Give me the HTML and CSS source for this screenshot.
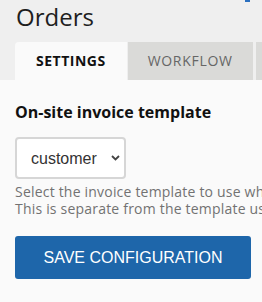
FILE: index.html
```html
<!DOCTYPE html>
<html lang="en">
<head>
    <meta charset="UTF-8">
    <title>Orders</title>
    <link rel="stylesheet" href="styles.css">
</head>
<body>
    <div class="page-head">
        <h1 class="page-title">Orders</h1>
        <a class="head-link" href="#"></a>
    </div>

    <div class="tabs">
        <div class="tab active">SETTINGS</div>
        <div class="tab">WORKFLOW</div>
        <div class="tab">EMAILS</div>
    </div>

    <div class="panel">
        <h2 class="field-label">On-site invoice template</h2>
        <div class="select-wrap">
            <select class="field-select">
                <option>customer</option>
                <option>default</option>
            </select>
            <svg class="chevron" width="9" height="6" viewBox="0 0 9 6">
                <path d="M1 1 L4.5 4.5 L8 1" fill="none" stroke="#444" stroke-width="1.8"/>
            </svg>
        </div>
        <p class="field-help">
            Select the invoice template to use when printing on-site invoices.<br>
            This is separate from the template used for emailed invoices.
        </p>
        <button class="btn-save">SAVE CONFIGURATION</button>
    </div>
</body>
</html>
```

FILE: styles.css
```css
body {
    margin: 0;
    background: #fafafa;
    font-family: 'Open Sans', sans-serif;
    overflow: hidden;
}

.page-head {
    display: flex;
    justify-content: space-between;
    align-items: flex-start;
    background: #efefef;
    padding: 0 12px 0 16px;
}

.page-title {
    margin: 0;
    font-size: 24px;
    font-weight: 400;
    color: #1e1e1e;
}

.head-link {
    display: block;
    width: 5px;
    height: 2px;
    background: #2a6fbf;
}

/* вкладки */
.tabs {
    display: flex;
    gap: 1px;
    background: #efefef;
    padding: 9px 0 0 15px;
    white-space: nowrap;
}

.tab {
    height: 38px;
    line-height: 38px;
    padding: 0 20px;
    font-size: 14px;
    letter-spacing: 0.7px;
    color: #666;
    background: #dadad8;
}

.tab + .tab + .tab {
    margin-left: 2px;
}

.tab.active {
    padding: 0 21px;
    font-weight: 700;
    letter-spacing: 0.5px;
    color: #111;
    background: #fafafa;
    border-radius: 4px 0 0 0;
}

.panel {
    padding: 21px 15px 0;
}

.field-label {
    margin: 0;
    font-size: 16px;
    line-height: 22px;
    font-weight: 700;
    color: #111;
}

.select-wrap {
    position: relative;
    width: 111px;
    margin-top: 14px;
}

.field-select {
    appearance: none;
    -webkit-appearance: none;
    width: 111px;
    height: 42px;
    padding: 0 0 0 14px;
    border: 2px solid #d6d6d6;
    border-radius: 4px;
    background: #fff;
    font-family: 'Liberation Sans', Arial, sans-serif;
    font-size: 16px;
    color: #333;
    outline: none;
}

.chevron {
    position: absolute;
    left: 111px;
    top: 18px;
    margin-left: -15px;
    pointer-events: none;
}

.field-help {
    margin: 4px 0 0;
    font-size: 14px;
    line-height: 17px;
    letter-spacing: 0.2px;
    color: #727272;
    white-space: nowrap;
}

.btn-save {
    display: block;
    width: 236px;
    height: 43px;
    margin-top: 19px;
    border: 0;
    border-radius: 3px;
    background: #1e66aa;
    color: #fff;
    font-family: 'Liberation Sans', Arial, sans-serif;
    font-size: 16px;
    cursor: pointer;
}
```
